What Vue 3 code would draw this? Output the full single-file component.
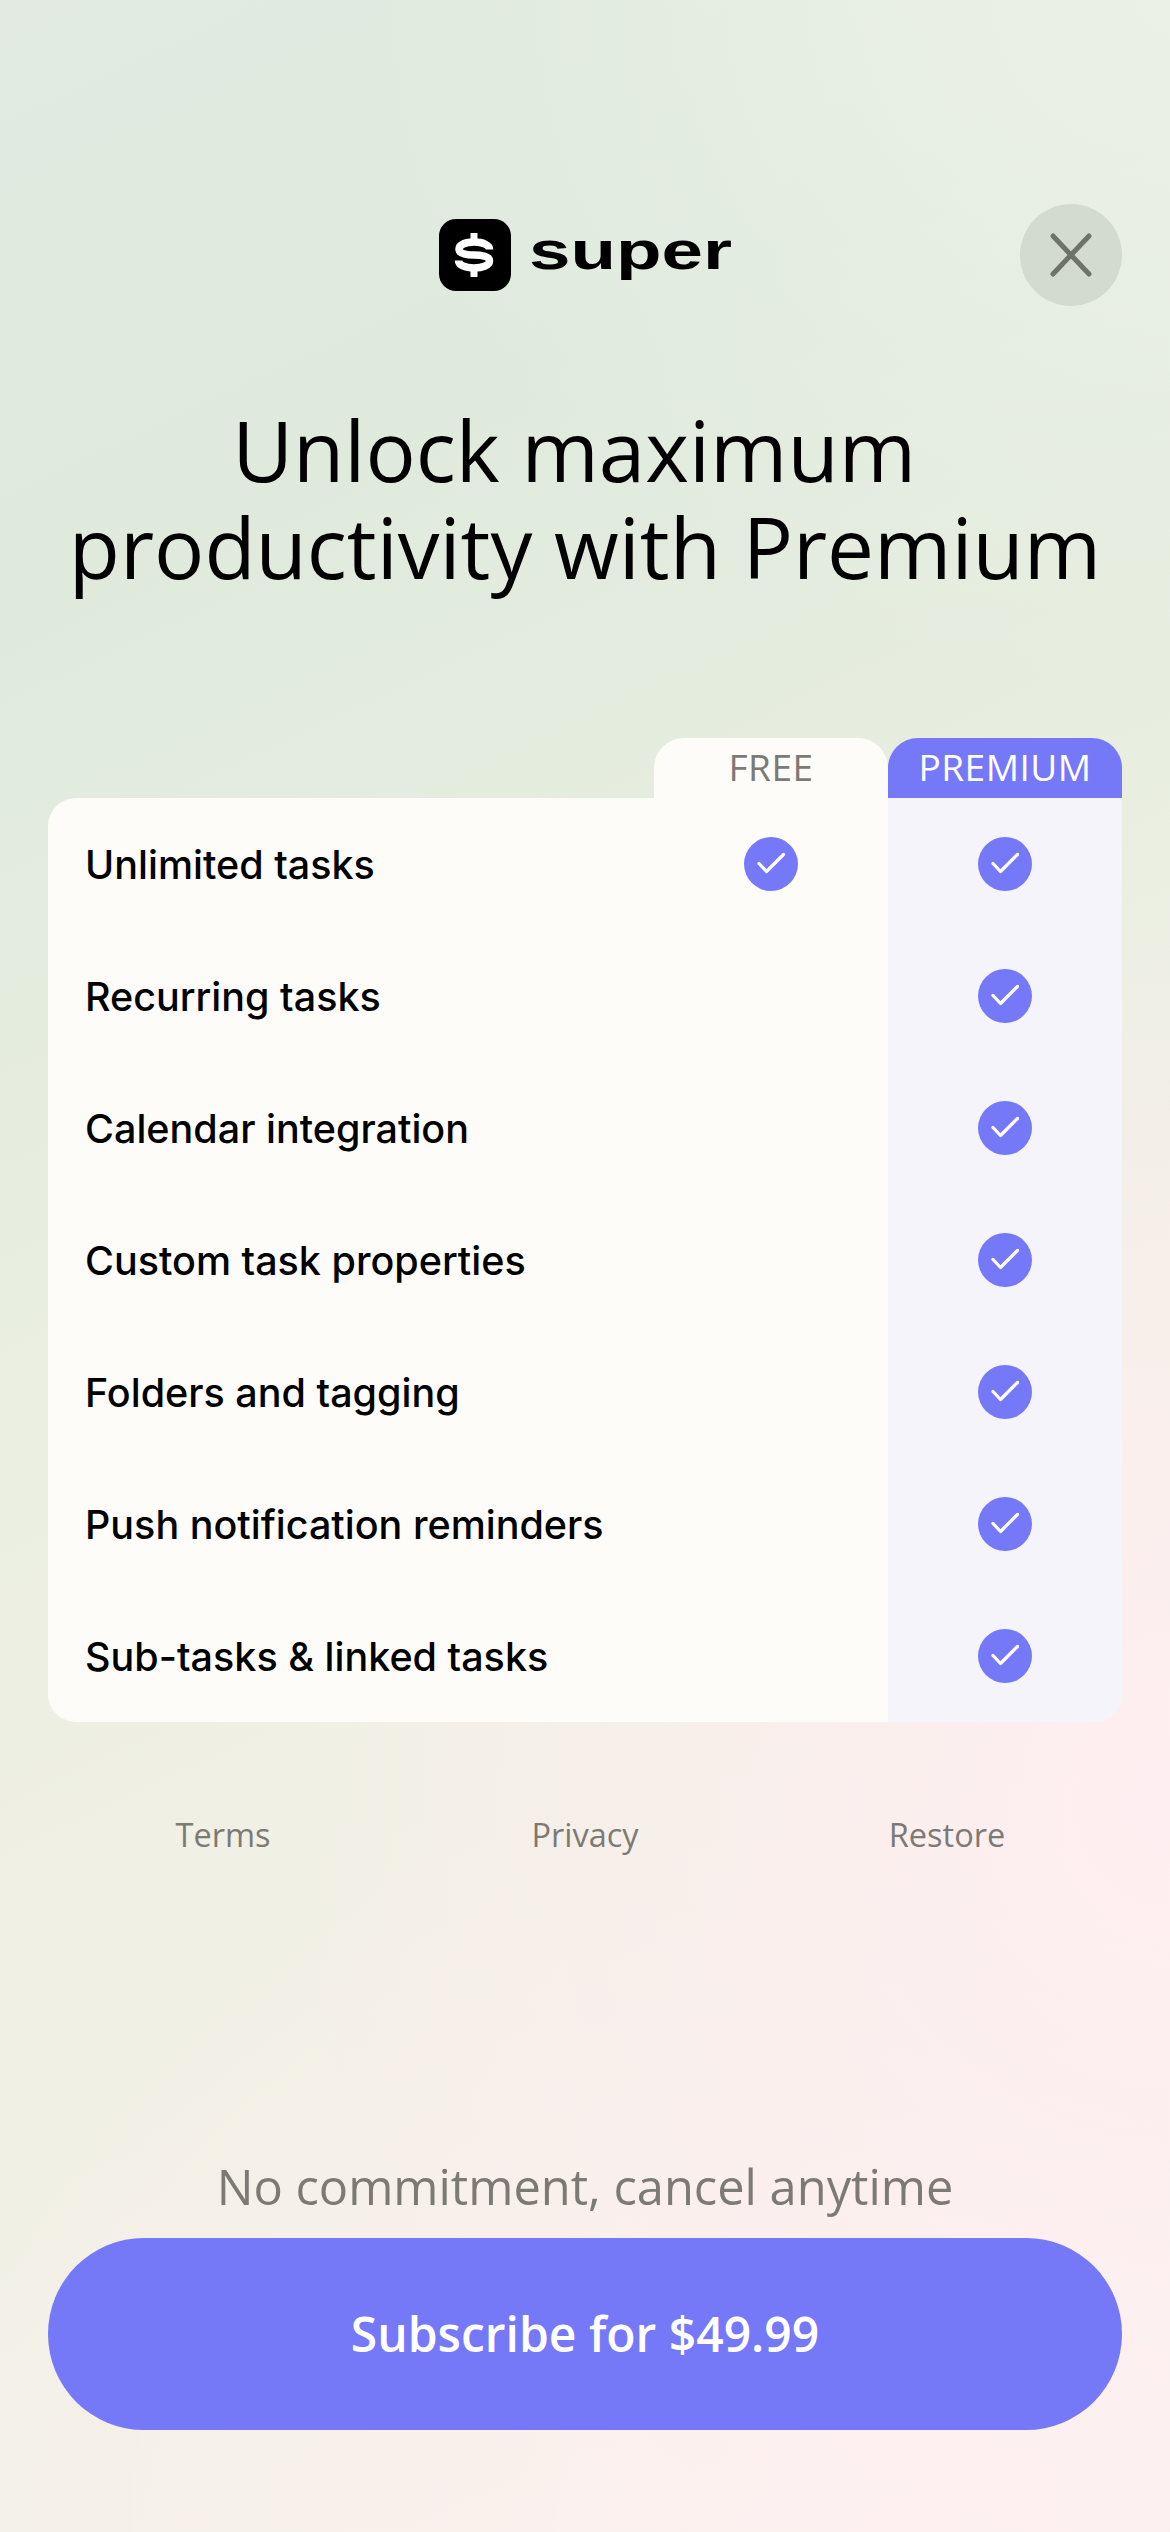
<script setup>
const features = [
  { name: 'Unlimited tasks', free: true },
  { name: 'Recurring tasks', free: false },
  { name: 'Calendar integration', free: false },
  { name: 'Custom task properties', free: false },
  { name: 'Folders and tagging', free: false },
  { name: 'Push notification reminders', free: false },
  { name: 'Sub-tasks & linked tasks', free: false },
]
</script>

<template>
  <main class="page">
    <header class="header">
      <div class="logo">
        <span class="logo-mark">
          <svg width="72" height="72" viewBox="0 0 72 72">
            <rect width="72" height="72" rx="17" fill="#000" />
            <path d="M35 14v8M35 50v8" stroke="#fff" stroke-width="7" fill="none" />
            <path d="M50.500 30.500C50.500 26 44 23 35 23 26 23 20 26 20 30 20 34 25 36 35 36 45 36 50.500 38 50.500 42 50.500 46 44 49 35 49 26 49 19.500 46 19.500 41.500" stroke="#fff" stroke-width="7.500" fill="none" />
          </svg>
        </span>
        <span class="logo-word">super</span>
      </div>
      <button class="close" aria-label="Close">
        <svg width="44" height="44" viewBox="0 0 44 44">
          <path d="M4 3 40 41M40 3 4 41" stroke="#6d736b" stroke-width="5" stroke-linecap="round" fill="none" />
        </svg>
      </button>
    </header>

    <h1 class="title">Unlock maximum&nbsp;<br />productivity with Premium</h1>

    <section class="table">
      <div class="tabs">
        <div class="tab tab-free">FREE</div>
        <div class="tab tab-premium">PREMIUM</div>
      </div>
      <div class="card">
        <div v-for="f in features" :key="f.name" class="row">
          <div class="label">{{ f.name }}</div>
          <div class="cell">
            <svg v-if="f.free" class="check" viewBox="0 0 54 54">
              <circle cx="27" cy="27" r="27" fill="#7579f8" />
              <path d="M15 26.500 22.500 34.500 39.500 17.500" stroke="#fff" stroke-width="3.200" stroke-linecap="round" stroke-linejoin="round" fill="none" />
            </svg>
          </div>
          <div class="cell cell-premium">
            <svg class="check" viewBox="0 0 54 54">
              <circle cx="27" cy="27" r="27" fill="#7579f8" />
              <path d="M15 26.500 22.500 34.500 39.500 17.500" stroke="#fff" stroke-width="3.200" stroke-linecap="round" stroke-linejoin="round" fill="none" />
            </svg>
          </div>
        </div>
      </div>
    </section>

    <nav class="links">
      <a>Terms</a>
      <a>Privacy</a>
      <a>Restore</a>
    </nav>

    <p class="note">No commitment, cancel anytime</p>
    <button class="subscribe">Subscribe for $49.99</button>
  </main>
</template>

<style>
html, body { margin: 0; padding: 0; }
</style>

<style scoped>
.page {
  width: 1170px;
  height: 2532px;
  box-sizing: border-box;
  padding: 204px 48px 0;
  font-family: "Open Sans", sans-serif;
  background:
    radial-gradient(900px 1000px at 1170px 1800px, rgba(255, 238, 241, 1), rgba(255, 238, 241, 0) 100%),
    radial-gradient(1000px 800px at 900px 2532px, rgba(255, 241, 241, 0.9), rgba(255, 241, 241, 0) 100%),
    radial-gradient(800px 700px at 1170px 0, rgba(236, 241, 230, 1), rgba(236, 241, 230, 0) 100%),
    linear-gradient(155deg, #e2eae1 0%, #dfeadd 20%, #e8eee0 42%, #f0f0e4 62%, #f5f1ea 100%);
  overflow: hidden;
}
.header {
  position: relative;
  height: 102px;
  display: flex;
  justify-content: center;
  align-items: center;
}
.logo {
  display: flex;
  align-items: center;
  gap: 18px;
}
.logo-mark { display: block; width: 72px; height: 72px; }
.logo-mark svg { display: block; }
.logo-word {
  display: block;
  width: 202px;
  font-family: "Liberation Sans", sans-serif;
  font-weight: 700;
  font-size: 54px;
  line-height: 72px;
  color: #000;
  transform: translateY(-5px) scaleX(1.38);
  transform-origin: left center;
}
.close {
  position: absolute;
  right: 0;
  top: 0;
  width: 102px;
  height: 102px;
  border: 0;
  padding: 0;
  border-radius: 50%;
  background: #d3dbd0;
  display: flex;
  align-items: center;
  justify-content: center;
}
.title {
  margin: 95px 0 0;
  text-align: center;
  font-weight: 400;
  font-size: 83.600px;
  line-height: 97px;
  color: #000;
}
.table { margin-top: 143px; }
.tabs {
  display: flex;
  justify-content: flex-end;
  height: 60px;
}
.tab {
  width: 234px;
  text-align: center;
  font-size: 37px;
  font-weight: 400;
  letter-spacing: 0.500px;
  line-height: 58px;
  border-radius: 30px 30px 0 0;
}
.tab-free { background: #fdfcf8; color: #7b7a75; }
.tab-premium { background: #7579f8; color: #fff; }
.card {
  border-radius: 28px 0 28px 28px;
  overflow: hidden;
  background: #fdfcf8;
}
.row {
  display: grid;
  grid-template-columns: 1fr 234px 234px;
  height: 132px;
}
.label {
  align-self: center;
  padding: 1px 0 0 37px;
  font-family: Inter, sans-serif;
  font-weight: 450;
  font-size: 39.500px;
  color: #000;
}
.cell {
  display: flex;
  align-items: center;
  justify-content: center;
}
.cell-premium { background: #f4f4fa; }
.check { width: 54px; height: 54px; display: block; }
.links {
  margin-top: 90px;
  display: grid;
  grid-template-columns: repeat(3, 362px);
  justify-content: center;
  text-align: center;
  font-size: 32.500px;
  font-weight: 400;
  line-height: 46px;
  color: #7c7a74;
}
.note {
  margin: 295px 0 0;
  text-align: center;
  font-size: 48.800px;
  line-height: 66px;
  color: #7c7a74;
}
.subscribe {
  display: block;
  width: 100%;
  height: 192px;
  margin-top: 19px;
  padding: 0 0 2px;
  border: 0;
  border-radius: 96px;
  background: #7579f8;
  color: #fff;
  font-family: "Open Sans", sans-serif;
  font-size: 48px;
  font-weight: 600;
}
</style>
